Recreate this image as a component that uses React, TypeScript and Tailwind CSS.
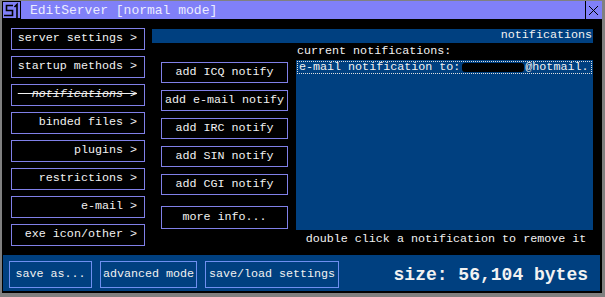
import React from "react";

const mono = "font-['Liberation_Mono','Courier_New',monospace]";

const leftItems = [
  "server settings >",
  "startup methods >",
  "notifications >",
  "binded files >",
  "plugins >",
  "restrictions >",
  "e-mail >",
  "exe icon/other >",
];

const notifyButtons = ["add ICQ notify", "add e-mail notify", "add IRC notify", "add SIN notify", "add CGI notify"];

function TitleIcon() {
  return (
    <svg width="19" height="18" viewBox="0 0 19 18" className="shrink-0">
      <rect x="0.5" y="0.5" width="18" height="17" fill="#8080f8" stroke="#000" />
      <path d="M11 4.5 H4.5 V9.5 H10.5 V14.5 H2" stroke="#000" strokeWidth="1.6" fill="none" />
      <path d="M12.5 6 L15 3.5 V17" stroke="#000" strokeWidth="1.6" fill="none" />
    </svg>
  );
}

function SideButton({ label, active }: { label: string; active?: boolean }) {
  return (
    <div className="flex h-[22px] items-center justify-end whitespace-nowrap border border-[#8080e8] pr-[7px] text-[#f2f2f2]">
      {active ? (
        <span className="whitespace-pre italic line-through">{"  " + label}</span>
      ) : (
        <span>{label}</span>
      )}
    </div>
  );
}

export default function App() {
  return (
    <div className={`h-[297px] w-[605px] bg-[#808080] pb-[4px] pl-[2px] pr-[3px] pt-[1px] text-[11.7px] leading-none ${mono}`}>
      <div className="flex h-full flex-col bg-black">
        {/* title bar */}
        <div className="flex h-[18px] shrink-0 items-center bg-[#8080f8]">
          <TitleIcon />
          <span className="ml-[9px] text-[13px] text-[#ececff]">EditServer [normal mode]</span>
          <div className="ml-auto mr-[2px] flex h-full w-[15px] items-center justify-center border-l border-black">
            <svg width="11" height="11" viewBox="0 0 11 11">
              <path d="M1 1 L10 10 M10 1 L1 10" stroke="#000" strokeWidth="1" />
            </svg>
          </div>
        </div>

        <div className="flex flex-1 flex-col">
          <div className="flex pl-[9px] pt-[9px]">
            <div className="flex w-[134px] flex-col gap-[6px]">
              {leftItems.map((l, i) => (
                <SideButton key={l} label={l} active={i === 2} />
              ))}
            </div>

            <div className="ml-[7px] flex w-[441px] flex-col pt-[1px]">
              <div className="flex h-[14px] items-center justify-end bg-[#004080] pr-[1px] text-[#f2f2f2]">
                notifications
              </div>
              <div className="flex">
                <div className="ml-[9px] flex w-[127px] flex-col gap-[7px] pt-[19px]">
                  {notifyButtons.map((b) => (
                    <div key={b} className="flex h-[21px] items-center justify-center whitespace-nowrap border border-[#8080e8] text-[#f2f2f2]">
                      {b}
                    </div>
                  ))}
                  <div className="mt-[4px] flex h-[23px] items-center justify-center border border-[#8080e8] text-[#f2f2f2]">
                    more info...
                  </div>
                </div>

                <div className="ml-[8px] flex w-[297px] flex-col">
                  <div className="flex h-[17px] items-center pl-[1px] text-[#f2f2f2]">current notifications:</div>
                  <div className="h-[170px] overflow-hidden bg-[#004080] pt-[1px]">
                    <div className="mx-[1px] flex h-[13px] items-center overflow-hidden whitespace-pre border border-dotted border-[#e0e0e0] pl-[1px] text-[#f2f2f2]">
                      <span>e-mail notification to: </span>
                      <span className="ml-[-5px] inline-block h-[9px] w-[62px] shrink-0 rounded-[3px] bg-black" />
                      <span className="ml-[1px]">@hotmail.</span>
                    </div>
                  </div>
                  <div className="flex h-[20px] items-center justify-center pl-[3px] text-[#f2f2f2]">
                    double click a notification to remove it
                  </div>
                </div>
              </div>
            </div>
          </div>

          {/* bottom bar */}
          <div className="mb-[2px] ml-[1px] mr-[2px] mt-auto flex h-[36px] items-center gap-[8px] bg-[#004080] pl-[6px] pt-[3px]">
            <div className="flex h-[27px] w-[83px] items-center justify-center border border-[#6f8ff0] text-[#f2f2f2]">save as...</div>
            <div className="flex h-[27px] w-[97px] items-center justify-center border border-[#6f8ff0] text-[#f2f2f2]">advanced mode</div>
            <div className="flex h-[27px] w-[134px] items-center justify-center border border-[#6f8ff0] text-[#f2f2f2]">save/load settings</div>
            <div className="ml-auto pr-[12px] text-[18px] font-bold text-[#f2f2f2]">size: 56,104 bytes</div>
          </div>
        </div>
      </div>
    </div>
  );
}
